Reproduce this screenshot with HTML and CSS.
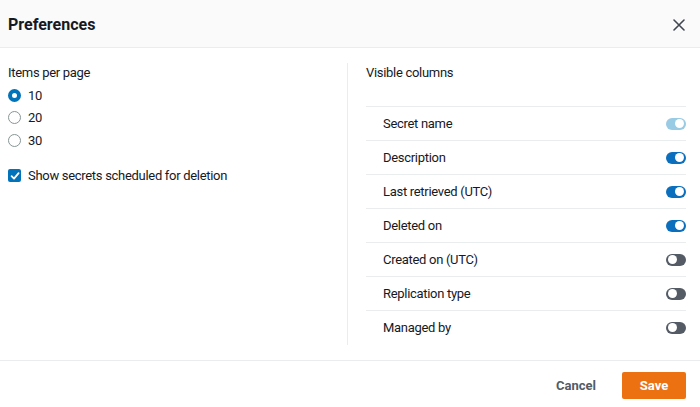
FILE: index.html
```html
<!DOCTYPE html>
<html>
<head>
<meta charset="utf-8">
<link rel="stylesheet" href="styles.css">
</head>
<body>
<div class="modal">
  <header class="head">
    <h2 class="title">Preferences</h2>
    <button class="close" aria-label="Close">
      <svg width="12" height="12" viewBox="0 0 12 12"><path d="M1 1 L11 11 M11 1 L1 11" stroke="#414750" stroke-width="1.6" fill="none" stroke-linecap="round"/></svg>
    </button>
  </header>
  <main class="body">
    <section class="left">
      <div class="label">Items per page</div>
      <div class="radios">
        <div class="opt"><span class="radio on"></span><span>10</span></div>
        <div class="opt"><span class="radio"></span><span>20</span></div>
        <div class="opt"><span class="radio"></span><span>30</span></div>
      </div>
      <div class="opt check-row">
        <span class="check"><svg width="10" height="10" viewBox="0 0 10 10"><path d="M1.6 5.2 L4 7.6 L8.6 2.2" stroke="#fff" stroke-width="1.8" fill="none" stroke-linecap="round" stroke-linejoin="round"/></svg></span>
        <span>Show secrets scheduled for deletion</span>
      </div>
    </section>
    <div class="divider"></div>
    <section class="right">
      <div class="label">Visible columns</div>
      <ul class="cols">
        <li class="row"><span>Secret name</span><span class="toggle disabled"></span></li>
        <li class="row"><span>Description</span><span class="toggle on"></span></li>
        <li class="row"><span>Last retrieved (UTC)</span><span class="toggle on"></span></li>
        <li class="row"><span>Deleted on</span><span class="toggle on"></span></li>
        <li class="row"><span>Created on (UTC)</span><span class="toggle"></span></li>
        <li class="row"><span>Replication type</span><span class="toggle"></span></li>
        <li class="row"><span>Managed by</span><span class="toggle"></span></li>
      </ul>
    </section>
  </main>
  <footer class="foot">
    <button class="btn-link">Cancel</button>
    <button class="btn-primary">Save</button>
  </footer>
</div>
</body>
</html>
```
FILE: styles.css
```css
* { box-sizing: border-box; }
html, body { margin: 0; padding: 0; background: #fff; }
body {
  font-family: Roboto, "Noto Sans", Arial, sans-serif;
  font-size: 13px;
  letter-spacing: -0.3px;
  color: #16191f;
}
.modal { width: 700px; height: 407px; display: flex; flex-direction: column; }
.head {
  height: 48px;
  background: #fafafa;
  border-bottom: 1px solid #eaeded;
  display: flex;
  align-items: center;
  justify-content: space-between;
  padding: 0 15px 0 8px;
}
.title { margin: 0; font-size: 16px; font-weight: 700; letter-spacing: 0; padding-top: 1px; }
.close { border: 0; background: none; padding: 0; display: flex; margin-top: 2px; }
.body {
  display: flex;
  padding: 15px 14px 15px 8px;
  border-bottom: 1px solid #eaeded;
  flex: none;
  height: 313px;
}
.left { width: 339px; }
.divider { width: 1px; background: #eaeded; }
.right { flex: 1; padding-left: 18px; }
.label { line-height: 20px; height: 20px; }
.radios { margin-top: 1px; display: flex; flex-direction: column; }
.opt { display: flex; align-items: center; height: 22.5px; gap: 7px; }
.radio {
  width: 13px; height: 13px; border-radius: 50%;
  border: 1.5px solid #879596; background: #fff; flex: none;
}
.radio.on { border: 4px solid #0073bb; }
.check-row { margin-top: 13px; }
.check {
  width: 13px; height: 13px; border-radius: 2px; background: #0073bb;
  display: flex; align-items: center; justify-content: center; flex: none;
}
.cols { list-style: none; margin: 23px 0 0; padding: 0; }
.row {
  height: 34px;
  border-top: 1px solid #eaeded;
  display: flex;
  align-items: center;
  justify-content: space-between;
  padding-left: 17px;
}
.toggle {
  width: 20px; height: 12px; border-radius: 6px; background: #545b64;
  position: relative; flex: none;
}
.toggle::after {
  content: ""; position: absolute; top: 1.5px; left: 2px;
  width: 9px; height: 9px; border-radius: 50%; background: #fff;
}
.toggle.on { background: #0b6fbd; }
.toggle.disabled { background: #99cbe4; }
.toggle.on::after, .toggle.disabled::after { left: 9px; }
.foot {
  flex: 1;
  display: flex;
  align-items: flex-start;
  justify-content: flex-end;
  padding: 11px 14px 0 0;
  gap: 14px;
}
.btn-link {
  border: 0; background: none; font: inherit; font-weight: 700;
  color: #545b64; height: 27px; padding: 0 12px; font-size: 13px;
}
.btn-primary {
  border: 0; background: #ec7211; color: #fff; font: inherit; font-weight: 700;
  width: 64px; height: 27px; border-radius: 2px; font-size: 13px;
}
```
